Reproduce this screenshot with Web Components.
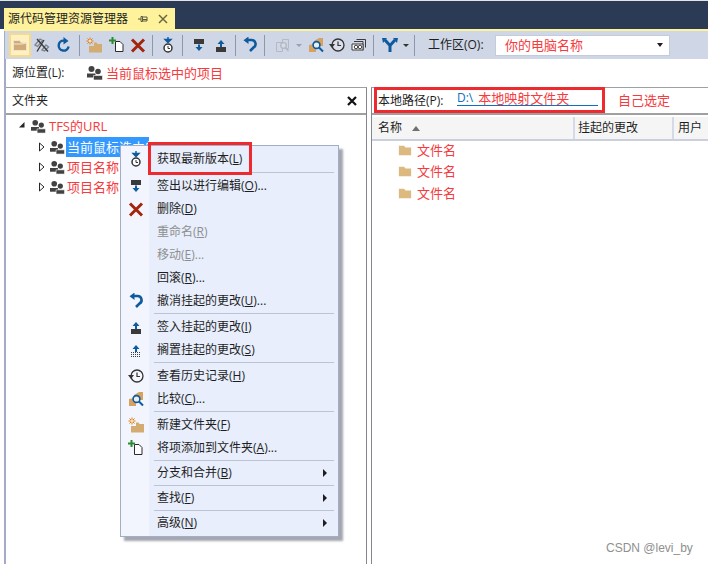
<!DOCTYPE html>
<html lang="zh">
<head>
<meta charset="utf-8">
<title>源代码管理资源管理器</title>
<style>
  html, body { margin: 0; padding: 0; background: #fff; }
  body { font: 12px/16px "Open Sans", "Noto Sans CJK SC", sans-serif; color: #1e1e1e; }
  .red { color: #f63a3e; font-size: 13px; }
  .link { color: #0e70c0; }
</style>
</head>
<body>
<vs-app>
  <vs-tab slot="tab">源代码管理资源管理器</vs-tab>

  <vs-toolbar slot="toolbar">
    <vs-tool icon="folder" checked></vs-tool>
    <vs-tool icon="crosslink" w="21"></vs-tool>
    <vs-tool icon="refresh" w="24"></vs-tool>
    <vs-tool-sep w="7"></vs-tool-sep>
    <vs-tool icon="newfolder"></vs-tool>
    <vs-tool icon="add" w="23"></vs-tool>
    <vs-tool icon="delete" w="20"></vs-tool>
    <vs-tool-sep></vs-tool-sep>
    <vs-tool icon="get" gap="1"></vs-tool>
    <vs-tool-sep w="6"></vs-tool-sep>
    <vs-tool icon="checkout" gap="3"></vs-tool>
    <vs-tool icon="checkin"></vs-tool>
    <vs-tool-sep w="6"></vs-tool-sep>
    <vs-tool icon="undo" gap="1"></vs-tool>
    <vs-tool-sep w="6"></vs-tool-sep>
    <vs-tool icon="compare" gap="5"></vs-tool>
    <vs-tool-drop dim></vs-tool-drop>
    <vs-tool icon="find" gap="1"></vs-tool>
    <vs-tool icon="history" w="20"></vs-tool>
    <vs-tool icon="shelf" gap="1"></vs-tool>
    <vs-tool-sep w="6"></vs-tool-sep>
    <vs-tool icon="branch" gap="3"></vs-tool>
    <vs-tool-drop></vs-tool-drop>
    <vs-tool-sep w="6"></vs-tool-sep>
    <vs-combo label="工作区(O):" value="你的电脑名称"></vs-combo>
  </vs-toolbar>

  <vs-source-row slot="source">
    <span slot="label">源位置(L):</span>
    <vs-icon name="team" slot="icon"></vs-icon>
    <span class="red">当前鼠标选中的项目</span>
  </vs-source-row>

  <vs-pane slot="left">
    <vs-folder-head slot="head">文件夹</vs-folder-head>
    <vs-tree>
      <vs-tree-row level="0" open><span class="red">TFS的URL</span></vs-tree-row>
      <vs-tree-row level="1" selected>当前鼠标选中的项目</vs-tree-row>
      <vs-tree-row level="1"><span class="red">项目名称</span></vs-tree-row>
      <vs-tree-row level="1"><span class="red">项目名称</span></vs-tree-row>
    </vs-tree>
  </vs-pane>

  <vs-pane slot="right" side="right">
    <vs-path-head slot="head">
      <span slot="label">本地路径(P):</span>
      <span class="link">D:\</span>
      <span class="red">本地映射文件夹</span>
      <span slot="note" class="red">自己选定</span>
    </vs-path-head>
    <vs-list>
      <vs-file-row>文件名</vs-file-row>
      <vs-file-row>文件名</vs-file-row>
      <vs-file-row>文件名</vs-file-row>
    </vs-list>
  </vs-pane>

  <vs-menu slot="overlay">
    <vs-menu-item icon="get">获取最新版本(<u>L</u>)</vs-menu-item>
    <vs-menu-sep h="4"></vs-menu-sep>
    <vs-menu-item icon="checkout">签出以进行编辑(<u>O</u>)...</vs-menu-item>
    <vs-menu-item icon="delete">删除(<u>D</u>)</vs-menu-item>
    <vs-menu-item disabled>重命名(<u>R</u>)</vs-menu-item>
    <vs-menu-item disabled>移动(<u>E</u>)...</vs-menu-item>
    <vs-menu-item>回滚(<u>R</u>)...</vs-menu-item>
    <vs-menu-item icon="undo">撤消挂起的更改(<u>U</u>)...</vs-menu-item>
    <vs-menu-sep h="3"></vs-menu-sep>
    <vs-menu-item icon="checkin">签入挂起的更改(<u>I</u>)</vs-menu-item>
    <vs-menu-item icon="shelve">搁置挂起的更改(<u>S</u>)</vs-menu-item>
    <vs-menu-sep></vs-menu-sep>
    <vs-menu-item icon="history">查看历史记录(<u>H</u>)</vs-menu-item>
    <vs-menu-item icon="find">比较(<u>C</u>)...</vs-menu-item>
    <vs-menu-sep></vs-menu-sep>
    <vs-menu-item icon="newfolder">新建文件夹(<u>F</u>)</vs-menu-item>
    <vs-menu-item icon="add">将项添加到文件夹(<u>A</u>)...</vs-menu-item>
    <vs-menu-sep h="2"></vs-menu-sep>
    <vs-menu-item arrow>分支和合并(<u>B</u>)</vs-menu-item>
    <vs-menu-sep h="2"></vs-menu-sep>
    <vs-menu-item arrow>查找(<u>F</u>)</vs-menu-item>
    <vs-menu-sep h="2"></vs-menu-sep>
    <vs-menu-item arrow>高级(<u>N</u>)</vs-menu-item>
  </vs-menu>

  <vs-watermark slot="overlay">CSDN @levi_by</vs-watermark>
</vs-app>

<script>
(function () {
  const ICONS = {
    folder: '<path d="M1.5 3.5h6l1.5 2h5.5v8h-13z" fill="#d0ab78" stroke="#eee3cf"/><path d="M1 7h9l4-1" fill="none" stroke="#f3ead9"/>',
    crosslink: '<path d="M1 8l5-6 2.500 1.500-5 6zM8 13l4-5 2.500 2-4 4z" fill="none" stroke="#7d838e" stroke-width="1.300"/><path d="M3 2l11 12.500M10 3L3 14.500" stroke="#3c3c3c" stroke-width="1.400"/>',
    refresh: '<path d="M12.600 9.500A5 5 0 1 1 8 3.600" fill="none" stroke="#0e5a9e" stroke-width="2.400"/><path d="M7.500 0v7.500L12.500 4z" fill="#0e5a9e"/>',
    newfolder: '<path d="M8 5.500h2.500l1 1.500H16v8.500H3V9h5z" fill="#d4ab70"/><path d="M4 .5v7M.5 4h7M1.500 1.500l5 5M6.500 1.500l-5 5" stroke="#e07b10" stroke-width="1"/><circle cx="4" cy="4" r="1.300" fill="#fbe3a6"/>',
    add: '<path d="M6.500 4.500h4.500l3 3v7H6.500z" fill="#fff" stroke="#2b2b2b"/><path d="M3.500 0v7M0 3.500h7" stroke="#2f8a2f" stroke-width="2"/>',
    delete: '<path d="M2 2.500l12 12M14 2.500l-12 12" stroke="#a1260d" stroke-width="3"/>',
    get: '<circle cx="8" cy="11" r="4" fill="#fff" stroke="#333" stroke-width="1.500"/><path d="M8 9v2.500h2" fill="none" stroke="#333"/><path d="M8 0v3M5 2.500l3 3 3-3z" fill="#0e5a9e" stroke="#0e5a9e" stroke-width="1.400"/>',
    checkout: '<path d="M3 2h10v5H3z" fill="#3a3a3a"/><path d="M8 7.500v3" stroke="#0e5a9e" stroke-width="2"/><path d="M4.500 10h7L8 14z" fill="#0e5a9e"/>',
    checkin: '<path d="M3 10h10v5H3z" fill="#3a3a3a"/><path d="M8 6.500v3.500" stroke="#0e5a9e" stroke-width="2"/><path d="M4.500 7h7L8 3z" fill="#0e5a9e"/>',
    shelve: '<path d="M3 10.500h10M3 12.500h10M3 14.500h10" stroke="#3a3a3a" stroke-dasharray="1 1"/><path d="M8 6.500v3.500" stroke="#0e5a9e" stroke-width="2"/><path d="M4.500 7h7L8 3z" fill="#0e5a9e"/>',
    undo: '<path d="M5 3h4.500a4 4 0 0 1 2 7.500L8 14" fill="none" stroke="#0e5a9e" stroke-width="2.600"/><path d="M6.500 -.5v7.500L1.500 3.200z" fill="#0e5a9e"/>',
    compare: '<path d="M4.500 5.500h3v-3h6v9h-4M1.500 5.500h6v9h-6z" fill="none" stroke="#b4b9c3"/><circle cx="8.500" cy="8.500" r="2.800" fill="#d4dae6" stroke="#b4b9c3" stroke-width="1.300"/><path d="M10.500 10.500l3 3.500" stroke="#b4b9c3" stroke-width="1.600"/>',
    find: '<path d="M1 8l5-1V4l5-3h4v8H8v6H1z" fill="#d6a25f"/><circle cx="8.500" cy="8" r="3.400" fill="#e9eef5" stroke="#0e5a9e" stroke-width="1.600"/><path d="M11 10.500l4 4" stroke="#0e5a9e" stroke-width="2"/>',
    history: '<circle cx="9" cy="8" r="6" fill="#fff" fill-opacity=".25" stroke="#333" stroke-width="1.300"/><path d="M9 4.500V8.500h3" fill="none" stroke="#333" stroke-width="1.200"/><path d="M0 7h6L3 11z" fill="#333"/>',
    shelf: '<path d="M5.500 2.500h9v8M3 4.500h9v9" fill="none" stroke="#3a3a3a"/><path d="M1 7h11v6H1z" fill="#fff" stroke="#3a3a3a"/><circle cx="5" cy="10" r="1.800" fill="none" stroke="#3a3a3a"/><circle cx="9" cy="10" r="1.800" fill="none" stroke="#3a3a3a"/>',
    branch: '<path d="M3 3l5 5.500L13 3M8 8v7" fill="none" stroke="#0e5a9e" stroke-width="3"/><path d="M0 1h5L1 6zM16 1h-5l4 5z" fill="#0e5a9e"/>',
    team: '<circle cx="4.500" cy="4" r="3" fill="#424242"/><path d="M0 8.500h8.500v4H0z" fill="#424242"/><circle cx="11" cy="6.500" r="2.800" fill="#424242"/><path d="M6.500 10.500h9V15h-9z" fill="#424242" stroke="#fff" stroke-width=".6"/>',
    filefolder: '<path d="M1 3h6l1.500 2H15v9H1z" fill="#dcb97e"/>'
  };

  // small helper so each element only has to give its markup
  class Base extends HTMLElement {
    constructor() {
      super();
      this.attachShadow({ mode: "open" });
    }
    connectedCallback() {
      this.shadowRoot.innerHTML = this.render();
    }
    render() { return "<slot></slot>"; }
  }

  function svg(name, size) {
    size = size || 16;
    return '<svg width="' + size + '" height="' + size + '" viewBox="0 0 16 16" style="display:block;flex:none" aria-hidden="true">' + (ICONS[name] || "") + "</svg>";
  }

  class VsIcon extends Base {
    render() {
      return "<style>:host{display:inline-block;width:16px;height:16px}</style>" + svg(this.getAttribute("name"));
    }
  }

  class VsApp extends Base {
    render() {
      return `<style>
        :host { display: block; position: relative; width: 708px; height: 564px; overflow: hidden; background: #fff; }
        .top { display: flex; height: 29px; box-sizing: border-box; padding: 7px 0 0 4px; background: #2b3a55; border-top: 1px solid #e4e4e4; }
        .frame { display: grid; grid-template-rows: 2px 28px 28px 1fr; height: 535px; margin-left: 4px; border-left: 2px solid #a3abc9; }
        .rule { background: #fff29d; margin-left: -2px; }
        .panes { display: grid; grid-template-columns: 361px 4px 1fr; min-height: 0; }
      </style>
      <div class="top"><slot name="tab"></slot></div>
      <div class="frame">
        <div class="rule"></div>
        <slot name="toolbar"></slot>
        <slot name="source"></slot>
        <div class="panes"><slot name="left"></slot><span></span><slot name="right"></slot></div>
      </div>
      <slot name="overlay"></slot>`;
    }
  }

  class VsTab extends Base {
    render() {
      return `<style>
        :host { display: flex; align-items: center; width: 171px; height: 21px; box-sizing: border-box; padding-left: 4px; background: #fff29d; color: #1e1e1e; font-size: 12px; }
        .t { flex: 1; white-space: nowrap; }
        svg { display: block; }
        .pin { margin-right: 10px; }
        .x { margin-right: 7px; }
      </style>
      <span class="t"><slot></slot></span>
      <svg class="pin" width="10" height="10" viewBox="0 0 10 10"><path d="M0 5h3M3 2.500h1.500v5H3zM4.500 3h4.500v4H4.500zM4.500 5.500H9" fill="none" stroke="#5c5a3c"/></svg>
      <svg class="x" width="10" height="10" viewBox="0 0 10 10"><path d="M1 1l8 8M9 1l-8 8" stroke="#6b6840" stroke-width="1.500"/></svg>`;
    }
  }

  class VsToolbar extends Base {
    render() {
      return `<style>
        :host { display: flex; align-items: center; margin-left: -1px; padding-left: 4px; background: #cfd6e5; height: 28px; box-sizing: border-box; }
      </style><slot></slot>`;
    }
  }

  class VsTool extends Base {
    render() {
      const w = this.getAttribute("w") || 22;
      const gap = this.getAttribute("gap") || 0;
      const on = this.hasAttribute("checked");
      return `<style>
        :host { display: flex; align-items: center; justify-content: center; width: ${w}px; height: 24px; box-sizing: border-box; margin-left: ${gap}px;
          ${on ? "background: #fff0c0; border: 2px solid #f5d98c;" : ""} }
      </style>` + svg(this.getAttribute("icon"));
    }
  }

  class VsToolSep extends Base {
    render() {
      const w = this.getAttribute("w") || 8;
      return `<style>
        :host { display: flex; justify-content: center; width: ${w}px; height: 21px; }
        i { width: 1px; background: #8e96a8; }
      </style><i></i>`;
    }
  }

  class VsToolDrop extends Base {
    render() {
      const c = this.hasAttribute("dim") ? "#9aa1b0" : "#333";
      return `<style>
        :host { display: flex; align-items: center; justify-content: center; width: 10px; height: 24px; }
        i { border: 3.500px solid transparent; border-top: 3px solid ${c}; border-bottom: 0; }
      </style><i></i>`;
    }
  }

  class VsCombo extends Base {
    render() {
      return `<style>
        :host { display: flex; align-items: center; margin-left: 11px; }
        .lab { width: 67px; color: #1e1e1e; white-space: nowrap; }
        .box { display: flex; align-items: center; justify-content: space-between; width: 175px; height: 21px; box-sizing: border-box; padding: 0 6px 0 9px; background: #fff; border: 1px solid #c4cbdb; color: #f63a3e; font-size: 13px; }
        i { border: 3.500px solid transparent; border-top: 4px solid #1e1e1e; border-bottom: 0; }
      </style>
      <span class="lab">${this.getAttribute("label")}</span>
      <div class="box"><span>${this.getAttribute("value")}</span><i></i></div>`;
    }
  }

  class VsSourceRow extends Base {
    render() {
      return `<style>
        :host { display: flex; align-items: center; height: 28px; box-sizing: border-box; padding-left: 6px; }
        .lab { width: 75px; }
        .ic { width: 19px; height: 16px; }
      </style>
      <span class="lab"><slot name="label"></slot></span>
      <span class="ic"><slot name="icon"></slot></span>
      <slot></slot>`;
    }
  }

  class VsPane extends Base {
    render() {
      const right = this.getAttribute("side") === "right";
      return `<style>
        :host { display: flex; flex-direction: column; min-height: 0; height: 477px; box-sizing: border-box; border-top: 1px solid #a0a0a0;
          ${right ? "border-left: 1px solid #828790;" : "border-right: 1px solid #828790;"} }
        .head { height: 25px; border-bottom: 2px solid #a0a0a0; }
      </style>
      <div class="head"><slot name="head"></slot></div>
      <slot></slot>`;
    }
  }

  class VsFolderHead extends Base {
    render() {
      return `<style>
        :host { display: flex; align-items: center; justify-content: space-between; height: 25px; padding: 0 9px 0 6px; }
      </style>
      <span><slot></slot></span>
      <svg width="10" height="10" viewBox="0 0 10 10" style="display:block"><path d="M1 1l8 8M9 1l-8 8" stroke="#111" stroke-width="2.200"/></svg>`;
    }
  }

  class VsPathHead extends Base {
    render() {
      return `<style>
        :host { display: flex; align-items: center; height: 25px; padding-left: 6px; white-space: nowrap; }
        .lab { width: 79px; }
        .path { display: flex; align-items: center; gap: 5px; width: 141px; height: 14px; margin-bottom: 4px; border-bottom: 1px solid #0e70c0; }
        .note { margin-left: 20px; }
      </style>
      <span class="lab"><slot name="label"></slot></span>
      <div class="path"><slot></slot></div>
      <span class="note"><slot name="note"></slot></span>
      <vs-callout></vs-callout>`;
    }
  }

  // red frame an annotator drew over the screenshot
  class VsCallout extends Base {
    render() {
      const first = this.hasAttribute("item");
      return `<style>
        :host { position: absolute; box-sizing: border-box; border: 3px solid #ee2a2e; pointer-events: none;
          ${first ? "left: 27px; top: -4px; width: 104px; height: 33px;" : "left: 374px; top: 87px; width: 231px; height: 26px;"} }
      </style>`;
    }
  }

  class VsTree extends Base {
    render() {
      return `<style>:host { display: block; padding-top: 1px; }</style><slot></slot>`;
    }
  }

  class VsTreeRow extends Base {
    render() {
      const level = +this.getAttribute("level");
      const open = this.hasAttribute("open");
      const sel = this.hasAttribute("selected");
      const arrow = open
        ? '<path d="M6.500 1v5.500H1z" fill="#262626"/>'
        : '<path d="M1.500 1l4.500 4-4.500 4z" fill="#fff" stroke="#262626"/>';
      return `<style>
        :host { display: flex; align-items: center; height: 20px; padding-left: ${12 + level * 20}px; margin-bottom: ${level ? 0 : 1}px; white-space: nowrap; font-size: 13px; }
        .ar { width: ${level ? 12 : 13}px; flex: none; }
        .ar svg { display: block; }
        .ic { width: ${level ? 16 : 18}px; flex: none; }
        .tx { padding-left: ${level ? 1 : 0}px; ${sel ? "box-sizing: border-box; width: 83px; background: #3399ff; color: #fff; line-height: 20px;" : ""} }
      </style>
      <span class="ar"><svg width="8" height="10" viewBox="0 0 8 10">${arrow}</svg></span>
      <span class="ic">${svg("team", 15)}</span>
      <span class="tx"><slot></slot></span>`;
    }
  }

  class VsList extends Base {
    render() {
      return `<style>
        :host { display: block; }
        .cols { display: flex; height: 22px; margin-top: 2px; background: #f5f5f5; border-bottom: 2px solid #cbd0dd; }
        .col { display: flex; align-items: center; box-sizing: border-box; padding-left: 6px; border-right: 2px solid #d6dae6; white-space: nowrap; overflow: hidden; }
        .sort { width: 0; height: 0; margin-left: 10px; border: 4.500px solid transparent; border-bottom: 5px solid #6f6f6f; border-top: 0; }
        .rows { margin-top: -2px; }
      </style>
      <div class="cols">
        <div class="col" style="width:203px">名称<i class="sort"></i></div>
        <div class="col" style="width:99px;padding-left:3px">挂起的更改</div>
        <div class="col" style="flex:1;border:0;padding-left:4px">用户</div>
      </div>
      <div class="rows"><slot></slot></div>`;
    }
  }

  class VsFileRow extends Base {
    render() {
      return `<style>
        :host { display: flex; align-items: center; gap: 5px; height: 21.500px; padding-left: 26px; color: #f63a3e; font-size: 13px; }
      </style>` + svg("filefolder", 14) + `<span><slot></slot></span>`;
    }
  }

  class VsMenu extends Base {
    render() {
      return `<style>
        :host { position: absolute; left: 120px; top: 145px; width: 219px; box-sizing: border-box; padding: 1px 1px 2px; background: linear-gradient(to right, #f2f5fd 28px, #e8eefc 28px); border: 1px solid #a2aec6; box-shadow: 4px 4px 2px rgba(90,95,110,.55); }
      </style><slot></slot><vs-callout item></vs-callout>`;
    }
  }

  class VsMenuItem extends Base {
    render() {
      const icon = this.getAttribute("icon");
      const off = this.hasAttribute("disabled");
      const arrow = this.hasAttribute("arrow");
      return `<style>
        :host { display: flex; align-items: center; height: 23px; white-space: nowrap; color: ${off ? "#8e8e8e" : "#1e1e1e"}; }
        .ic { display: flex; justify-content: center; width: 28px; margin-right: 7px; flex: none; }
        .tx { flex: 1; }
        .ar { width: 0; height: 0; margin-right: 10px; border: 4px solid transparent; border-left: 4px solid #1e1e1e; border-right: 0; }
      </style>
      <span class="ic">${icon ? svg(icon) : ""}</span>
      <span class="tx"><slot></slot></span>
      ${arrow ? '<i class="ar"></i>' : ""}`;
    }
  }

  class VsMenuSep extends Base {
    render() {
      const h = +(this.getAttribute("h") || 3);
      return `<style>
        :host { display: flex; align-items: center; height: ${h}px; padding: 0 3px 0 32px; }
        i { flex: 1; height: 1px; background: #bcc3d3; }
      </style><i></i>`;
    }
  }

  // CSDN mark in the bottom corner of the picture
  class VsWatermark extends Base {
    render() {
      return `<style>
        :host { position: absolute; left: 606px; top: 540px; font: 12px/16px "Liberation Sans", sans-serif; color: #8f8f8f; white-space: nowrap; }
      </style><slot></slot>`;
    }
  }

  customElements.define("vs-icon", VsIcon);
  customElements.define("vs-app", VsApp);
  customElements.define("vs-tab", VsTab);
  customElements.define("vs-toolbar", VsToolbar);
  customElements.define("vs-tool", VsTool);
  customElements.define("vs-tool-sep", VsToolSep);
  customElements.define("vs-tool-drop", VsToolDrop);
  customElements.define("vs-combo", VsCombo);
  customElements.define("vs-source-row", VsSourceRow);
  customElements.define("vs-pane", VsPane);
  customElements.define("vs-folder-head", VsFolderHead);
  customElements.define("vs-path-head", VsPathHead);
  customElements.define("vs-callout", VsCallout);
  customElements.define("vs-tree", VsTree);
  customElements.define("vs-tree-row", VsTreeRow);
  customElements.define("vs-list", VsList);
  customElements.define("vs-file-row", VsFileRow);
  customElements.define("vs-menu", VsMenu);
  customElements.define("vs-menu-item", VsMenuItem);
  customElements.define("vs-menu-sep", VsMenuSep);
  customElements.define("vs-watermark", VsWatermark);
})();
</script>
</body>
</html>
